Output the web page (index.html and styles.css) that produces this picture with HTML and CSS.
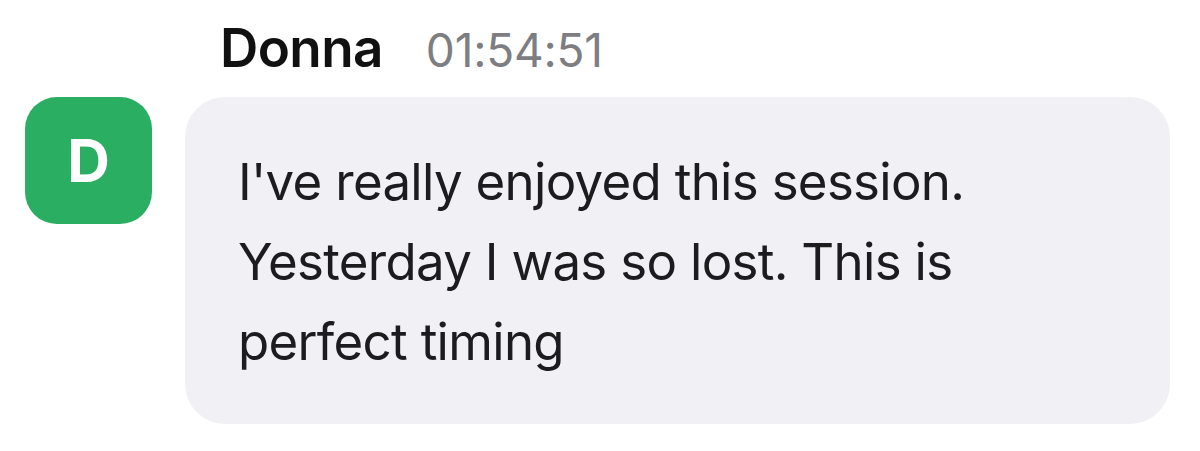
FILE: index.html
```html
<!DOCTYPE html>
<html lang="en">
<head>
<meta charset="utf-8">
<link rel="stylesheet" href="styles.css">
</head>
<body>
<div class="msg">
  <div class="avatar">D</div>
  <div class="content">
    <div class="header">
      <span class="name">Donna</span>
      <span class="time">01:54:51</span>
    </div>
    <div class="bubble">I've really enjoyed this session. Yesterday I was so lost. This is perfect timing</div>
  </div>
</div>
</body>
</html>
```
FILE: styles.css
```css
html, body {
  margin: 0;
  padding: 0;
  background: #ffffff;
}
body {
  font-family: Inter, "Liberation Sans", Arial, sans-serif;
  -webkit-font-smoothing: antialiased;
}
.msg {
  display: flex;
  align-items: flex-start;
  gap: 33px;
  padding: 18px 30px 0 25px;
}
.avatar {
  flex: none;
  width: 127px;
  height: 127px;
  margin-top: 79px;
  border-radius: 32px;
  background: #2aae62;
  color: #ffffff;
  display: flex;
  align-items: center;
  justify-content: center;
  font-weight: 700;
  font-size: 59px;
}
.content {
  flex: 1;
  min-width: 0;
}
.header {
  display: flex;
  align-items: baseline;
  gap: 43px;
  padding-left: 35px;
  height: 60px;
  line-height: 60px;
  margin-bottom: 19px;
}
.name {
  font-size: 53px;
  font-weight: 600;
  letter-spacing: -0.6px;
  color: #111111;
}
.time {
  font-size: 46px;
  letter-spacing: -0.2px;
  color: #7d7d82;
}
.bubble {
  background: #f0f0f5;
  border-radius: 40px;
  padding: 45px 200px 42px 53px;
  font-size: 51px;
  letter-spacing: -0.7px;
  line-height: 80px;
  color: #1c1c1e;
}
```
